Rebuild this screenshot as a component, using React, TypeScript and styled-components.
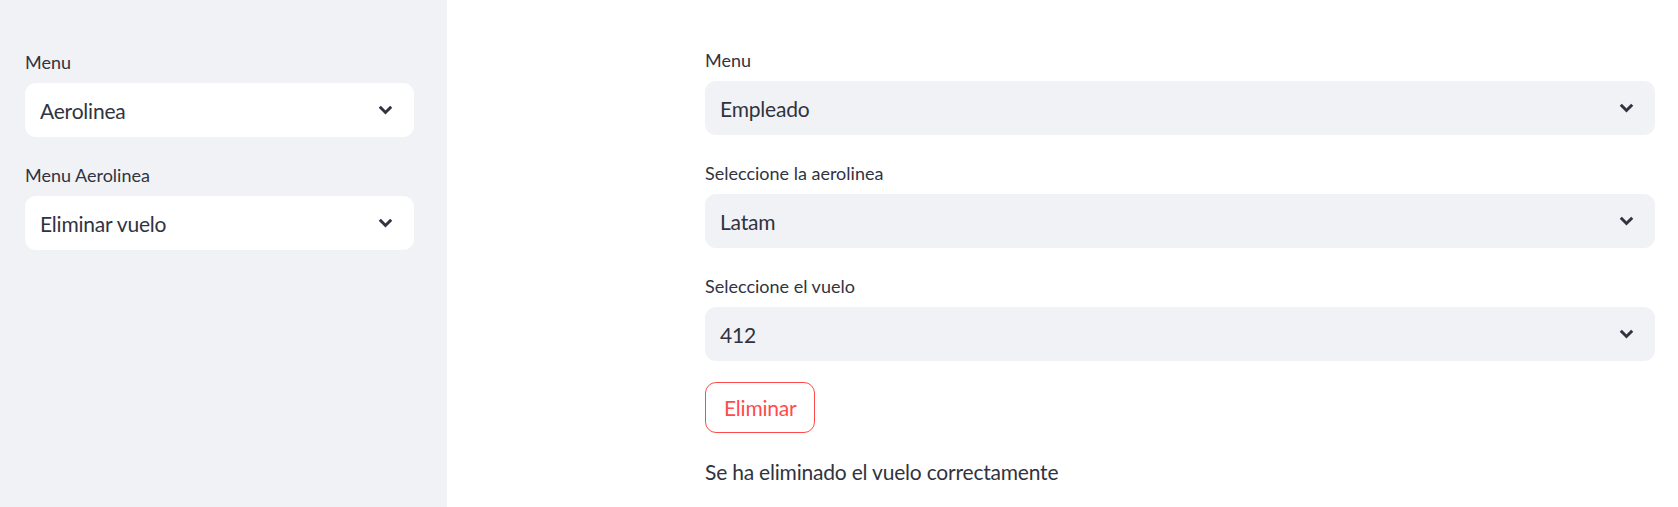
import styled, { createGlobalStyle } from "styled-components";

const COLORS = {
  text: "#31333f",
  panel: "#f0f2f6",
  white: "#ffffff",
  red: "#ff4b4b",
};

const GlobalStyle = createGlobalStyle`
  html, body {
    margin: 0;
    padding: 0;
    background: ${COLORS.white};
    font-family: Lato, "Noto Sans", sans-serif;
    color: ${COLORS.text};
  }
`;

const S = {
  Page: styled.div`
    display: flex;
    width: 1678px;
    height: 507px;
    overflow: hidden;
  `,
  Sidebar: styled.aside`
    width: 447px;
    flex-shrink: 0;
    box-sizing: border-box;
    background: ${COLORS.panel};
    padding: 49px 33px 0 25px;
    display: flex;
    flex-direction: column;
    gap: 25px;
  `,
  Main: styled.main`
    flex: 1;
    box-sizing: border-box;
    padding: 47px 23px 0 258px;
    display: flex;
    flex-direction: column;
    gap: 25px;
  `,
  Field: styled.div`
    display: flex;
    flex-direction: column;
  `,
  Label: styled.label`
    font-size: 18px;
    line-height: 27px;
    letter-spacing: 0;
    margin-bottom: 7px;
  `,
  Select: styled.div<{ $light?: boolean }>`
    height: 54px;
    box-sizing: border-box;
    display: flex;
    align-items: center;
    justify-content: space-between;
    padding: 0 21px 0 15px;
    border-radius: 11px;
    background: ${(p) => (p.$light ? COLORS.white : COLORS.panel)};
    font-size: 21px;
    letter-spacing: -0.2px;
  `,
  Button: styled.button`
    align-self: flex-start;
    height: 51px;
    margin-top: -4px;
    padding: 0 17px 0 18px;
    border: 1px solid ${COLORS.red};
    border-radius: 11px;
    background: ${COLORS.white};
    color: ${COLORS.red};
    font-family: inherit;
    font-size: 21px;
    letter-spacing: -0.2px;
  `,
  Message: styled.p`
    margin: -3px 0 0;
    font-size: 21px;
    line-height: 34px;
    letter-spacing: -0.2px;
  `,
};

const Chevron = () => (
  <svg width="15" height="10" viewBox="0 0 15 10" fill="none">
    <polyline
      points="1.8,1.8 7.5,7.5 13.2,1.8"
      stroke={COLORS.text}
      strokeWidth="3"
    />
  </svg>
);

const SelectBox = ({ label, value, light }: { label: string; value: string; light?: boolean }) => (
  <S.Field>
    <S.Label>{label}</S.Label>
    <S.Select $light={light}>
      <span>{value}</span>
      <Chevron />
    </S.Select>
  </S.Field>
);

export default function App() {
  return (
    <>
      <GlobalStyle />
      <S.Page>
        <S.Sidebar>
          <SelectBox label="Menu" value="Aerolinea" light />
          <SelectBox label="Menu Aerolinea" value="Eliminar vuelo" light />
        </S.Sidebar>
        <S.Main>
          <SelectBox label="Menu" value="Empleado" />
          <SelectBox label="Seleccione la aerolinea" value="Latam" />
          <SelectBox label="Seleccione el vuelo" value="412" />
          <S.Button>Eliminar</S.Button>
          <S.Message>Se ha eliminado el vuelo correctamente</S.Message>
        </S.Main>
      </S.Page>
    </>
  );
}
